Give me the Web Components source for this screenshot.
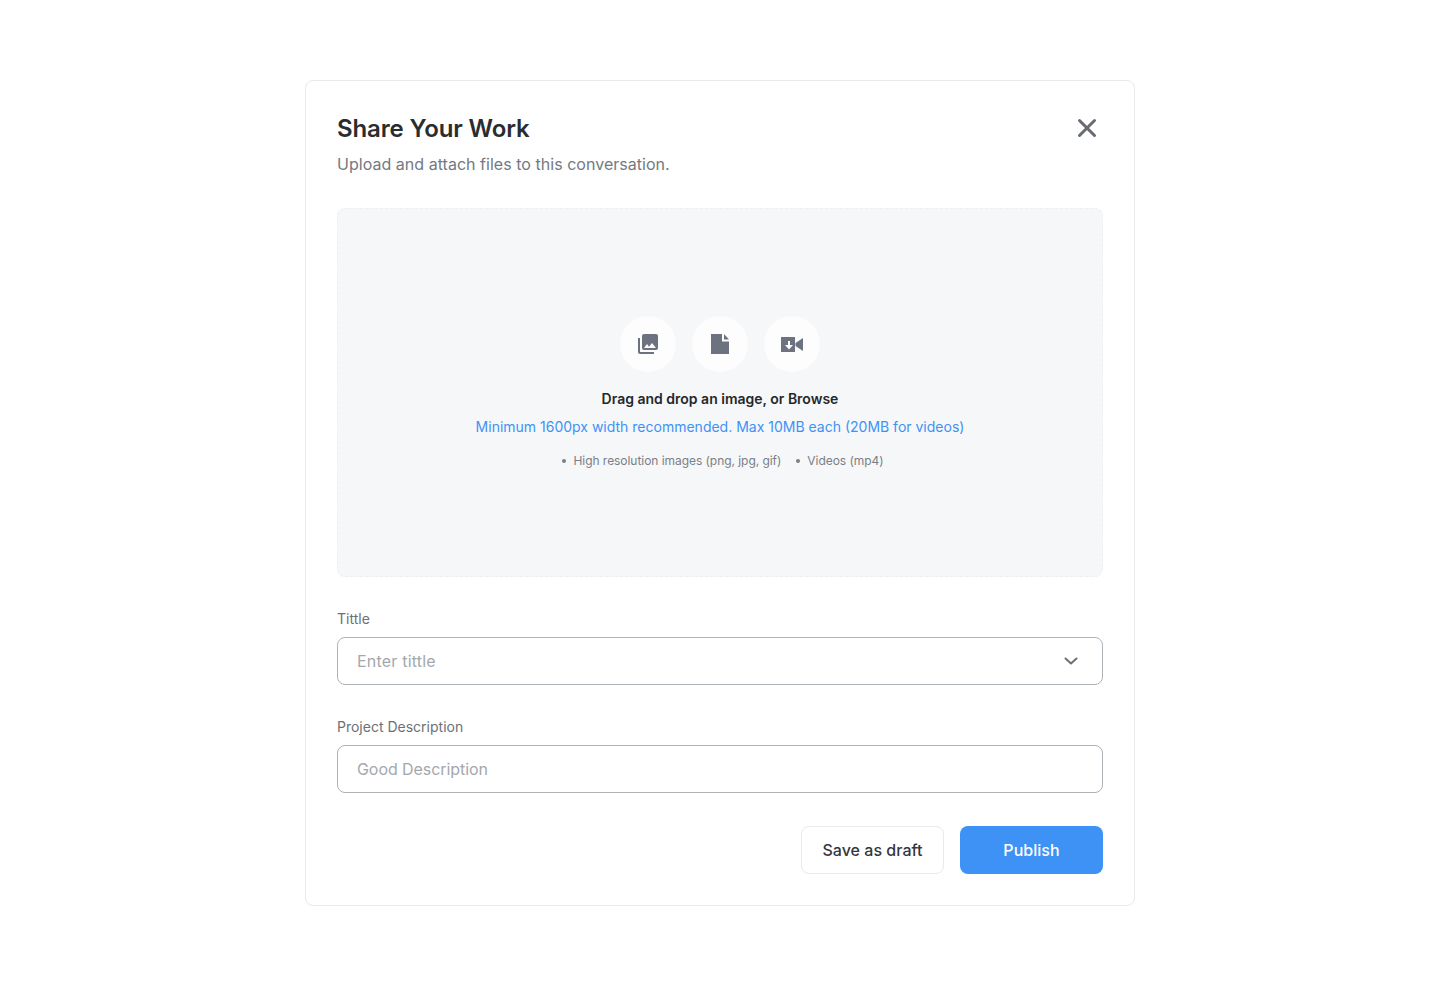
<!DOCTYPE html>
<html lang="en">
<head>
<meta charset="utf-8">
<title>Share Your Work</title>
<style>
html,body{margin:0;padding:0;background:#fff;font-family:Inter,"Liberation Sans",sans-serif}
body{min-height:986px;box-sizing:border-box;padding-top:80px;display:flex;justify-content:center;align-items:flex-start}
</style>
</head>
<body>
<share-dialog></share-dialog>
<script>
function def(name, html){
  customElements.define(name, class extends HTMLElement{
    constructor(){super();this.attachShadow({mode:'open'}).innerHTML=html(this);}
  });
}
def('icon-circle',()=>`<style>:host{display:flex;width:56px;height:56px;border-radius:50%;background:#fdfdfd;align-items:center;justify-content:center}
::slotted(svg){display:block}</style><slot></slot>`);
def('drop-zone',()=>`<style>
:host{display:flex;flex-direction:column;align-items:center;box-sizing:border-box;height:369px;background:#f6f7f8;border:1px dashed #eeeff1;border-radius:8px;padding-top:107px}
.icons{display:flex;gap:16px}
.main{margin:17px 0 0;font-size:14px;line-height:20px;font-weight:600;color:#25282b}
.hint{margin:8px 0 0;font-size:14px;line-height:20px;color:#3f92f5}
ul{display:flex;gap:15px;margin:14px 0 0;padding:0;list-style:none;font-size:12px;line-height:20px;color:#7a7f86;letter-spacing:-.05px;transform:translateX(3px)}
li{display:flex;align-items:center;gap:7px}
li::before{content:"";width:4px;height:4px;border-radius:50%;background:#7a7f86}
</style>
<div class="icons">
<icon-circle><svg width="24" height="24" viewBox="0 0 24 24" fill="#6c727f"><path d="M22 16V4a2 2 0 0 0-2-2H8a2 2 0 0 0-2 2v12a2 2 0 0 0 2 2h12a2 2 0 0 0 2-2zm-11-4 2.030 2.710L16 11l4 5H8l3-4zM2 6v14a2 2 0 0 0 2 2h14v-2H4V6H2z"/></svg></icon-circle>
<icon-circle><svg width="24" height="24" viewBox="0 0 24 24" fill="#6c727f"><path d="M3 2h11v7.500h7V22H3V2zm13 0 5 5.500h-5V2z"/></svg></icon-circle>
<icon-circle><svg width="24" height="24" viewBox="0 0 24 24" fill="#6c727f"><path fill-rule="evenodd" d="M1 5h14v15H1V5zm7 4v4H5l4 4.500 4-4.500h-3V9H8z"/><path d="M15.500 11 23 6v13l-7.500-5v-3z"/></svg></icon-circle>
</div>
<p class="main">Drag and drop an image, or Browse</p>
<p class="hint">Minimum 1600px width recommended. Max 10MB each (20MB for videos)</p>
<ul><li>High resolution images (png, jpg, gif)</li><li>Videos (mp4)</li></ul>`);
def('form-field',(el)=>`<style>
:host{display:block}
label{display:block;font-size:14px;line-height:20px;color:#6c7177;margin-bottom:8px}
.box{box-sizing:border-box;height:48px;border:1px solid #aeb3b7;border-radius:8px;padding:0 23px 0 19px;display:flex;align-items:center;justify-content:space-between;background:#fff}
span{font-size:16px;color:#a3a8ad;letter-spacing:${el.getAttribute('spacing')||0}px}
svg{display:${el.hasAttribute('select')?'block':'none'}}
</style>
<label>${el.getAttribute('label')}</label>
<div class="box"><span>${el.getAttribute('placeholder')}</span>
<svg width="16" height="16" viewBox="0 0 16 16" fill="none" stroke="#6c7177" stroke-width="2" stroke-linecap="round" stroke-linejoin="round"><path d="M2.500 5.500 8 10.500l5.500-5"/></svg></div>`);
def('action-button',(el)=>{const p=el.hasAttribute('primary');return `<style>
:host{display:block}
button{box-sizing:border-box;width:143px;height:48px;border-radius:8px;font:500 16px/20px Inter,"Liberation Sans",sans-serif;letter-spacing:.03px;
background:${p?'#3f92f5':'#fff'};color:${p?'#fff':'#34373b'};border:${p?'0':'1px solid #e8e9eb'};padding:0}
</style><button><slot></slot></button>`});
def('share-dialog',()=>`<style>
:host{display:flex;flex-direction:column;box-sizing:border-box;width:830px;height:826px;background:#fff;border:1px solid #e8e9eb;border-radius:8px;padding:31px}
header{display:flex;justify-content:space-between;align-items:flex-start;margin-bottom:32px}
h1{margin:1px 0 0;font-size:24px;line-height:32px;font-weight:600;color:#2a2d30;letter-spacing:-.13px}
p{margin:7px 0 0;font-size:16px;line-height:24px;color:#74797f;letter-spacing:.03px}
svg{display:block}
form-field.a,form-field.b{margin-top:32px}
.actions{display:flex;justify-content:flex-end;gap:16px;margin-top:33px}
</style>
<header><div><h1>Share Your Work</h1><p>Upload and attach files to this conversation.</p></div>
<svg width="32" height="32" viewBox="0 0 32 32" fill="none" stroke="#666c72" stroke-width="3" stroke-linecap="round"><path d="M8.500 8.500l15 15M23.500 8.500l-15 15"/></svg></header>
<drop-zone></drop-zone>
<form-field class="a" label="Tittle" placeholder="Enter tittle" spacing=".2" select></form-field>
<form-field class="b" label="Project Description" placeholder="Good Description" spacing="-.07"></form-field>
<div class="actions"><action-button>Save as draft</action-button><action-button primary>Publish</action-button></div>`);
</script>
</body>
</html>
